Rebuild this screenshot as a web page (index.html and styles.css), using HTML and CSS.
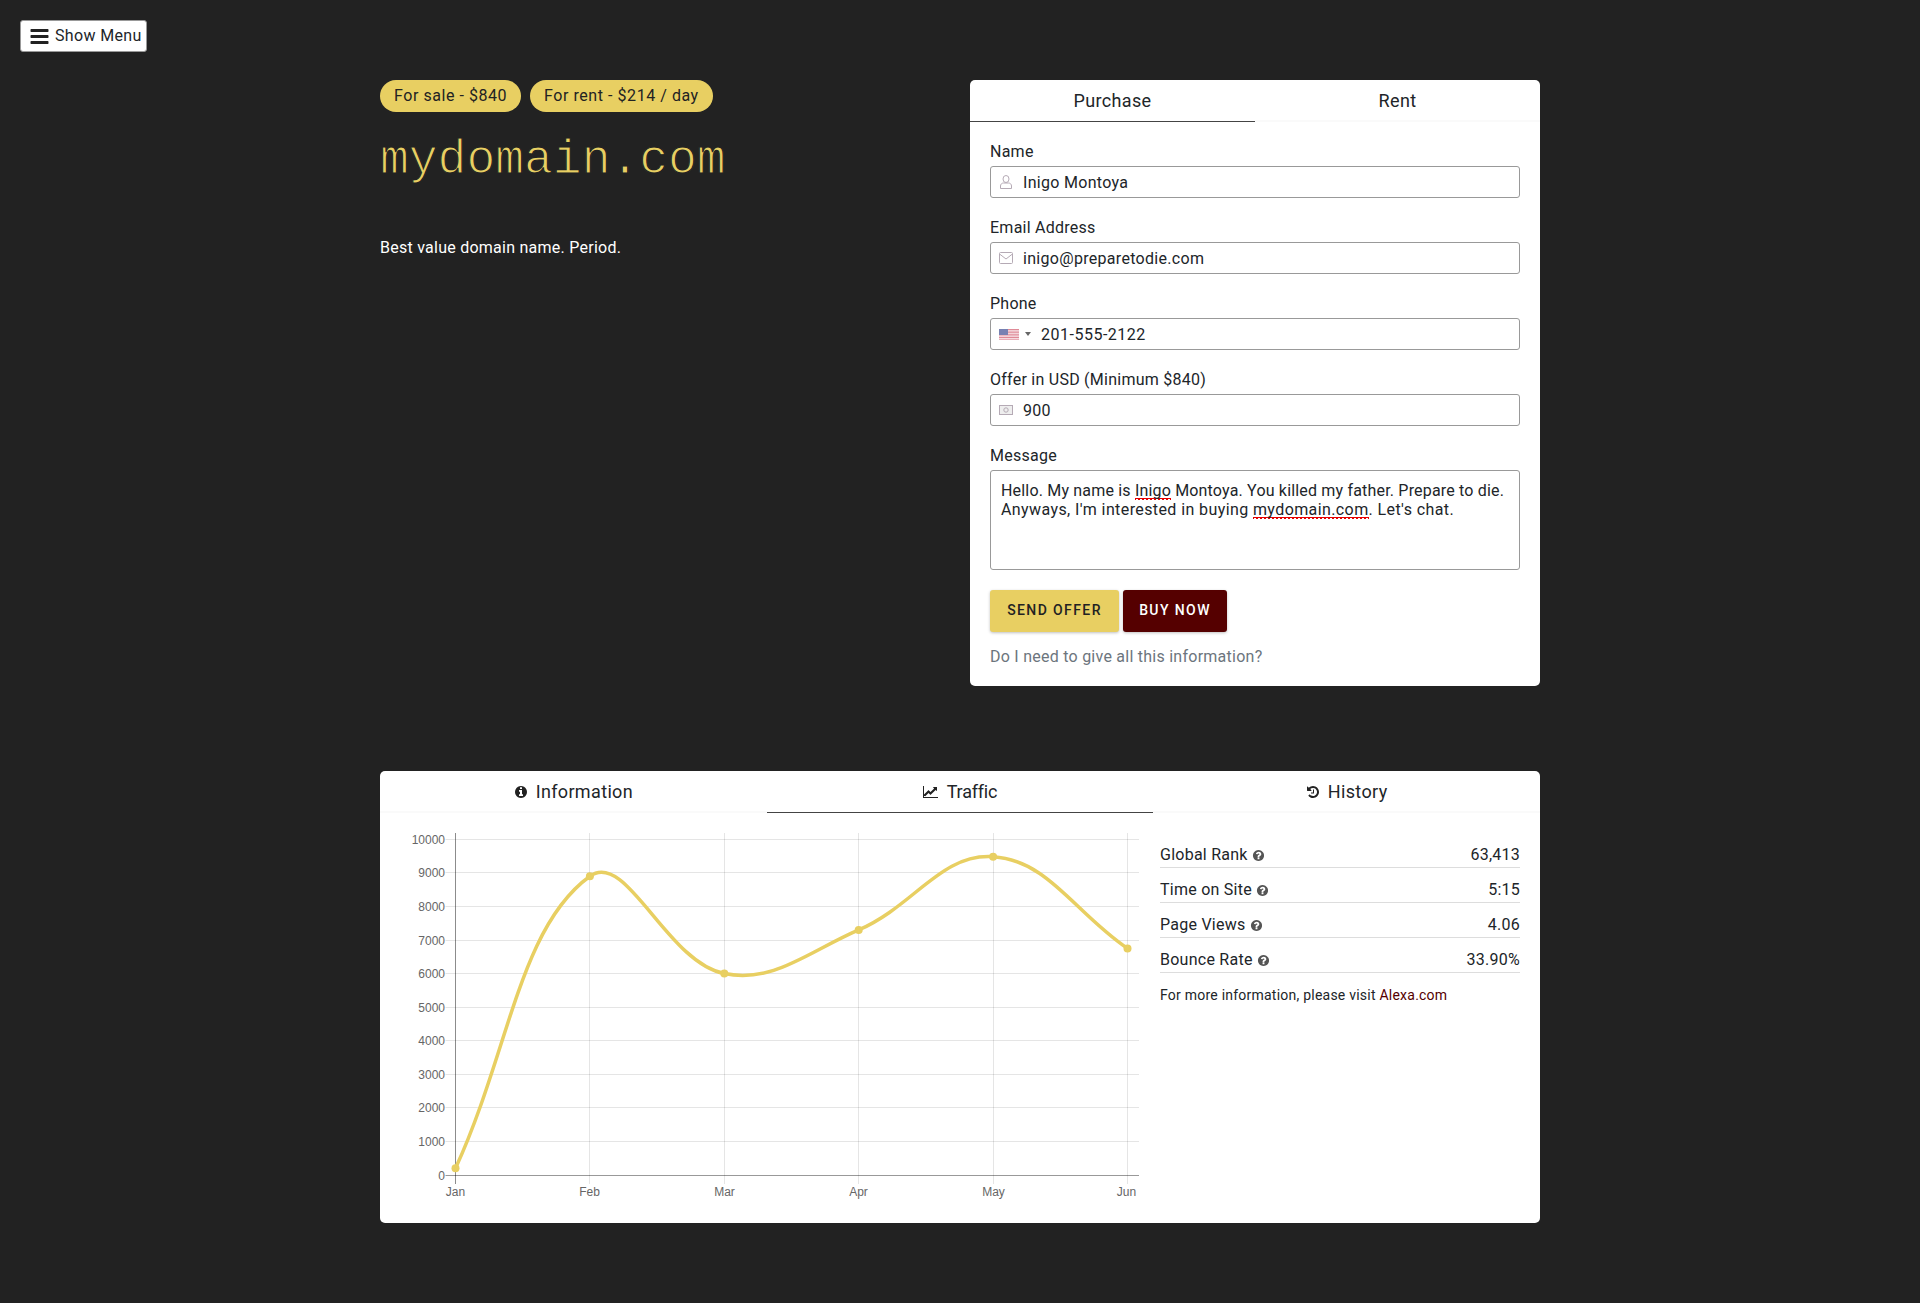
FILE: index.html
```html
<!DOCTYPE html>
<html lang="en">
<head>
    <meta charset="UTF-8">
    <meta name="viewport" content="width=device-width, initial-scale=1.0">
    <title>mydomain.com</title>
    <link rel="stylesheet" href="styles.css">
</head>
<body>
    <div class="menu-bar">
        <button class="menu-button" type="button">
            <svg class="menu-icon" viewBox="0 0 1792 1792"><path d="M1664 1344v128q0 26-19 45t-45 19h-1408q-26 0-45-19t-19-45v-128q0-26 19-45t45-19h1408q26 0 45 19t19 45zm0-512v128q0 26-19 45t-45 19h-1408q-26 0-45-19t-19-45v-128q0-26 19-45t45-19h1408q26 0 45 19t19 45zm0-512v128q0 26-19 45t-45 19h-1408q-26 0-45-19t-19-45v-128q0-26 19-45t45-19h1408q26 0 45 19t19 45z"/></svg>
            <span>Show Menu</span>
        </button>
    </div>

    <div class="container">
        <div class="top-row">
            <div class="intro">
                <div class="pills">
                    <span class="pill">For sale - $840</span>
                    <span class="pill">For rent - $214 / day</span>
                </div>
                <h1 class="domain">mydomain.com</h1>
                <p class="tagline">Best value domain name. Period.</p>
            </div>

            <div class="card">
                <div class="tabs">
                    <a class="tab active">Purchase</a>
                    <a class="tab">Rent</a>
                </div>
                <form class="offer-form">
                    <div class="field">
                        <label for="name">Name</label>
                        <div class="input-wrap">
                            <svg class="input-icon" viewBox="0 0 14 14"><ellipse cx="7" cy="4" rx="3" ry="3.500"/><path d="M1.500 13.500v-2.500c0-1.800 1.400-3 3-3h5c1.600 0 3 1.200 3 3v2.500z"/></svg>
                            <input type="text" id="name" value="Inigo Montoya">
                        </div>
                    </div>
                    <div class="field">
                        <label for="email">Email Address</label>
                        <div class="input-wrap">
                            <svg class="input-icon" viewBox="0 0 14 12"><rect x=".5" y=".5" width="13" height="11" rx="1"/><path d="M.8 2.200 7 7l6.200-4.800"/></svg>
                            <input type="text" id="email" value="inigo@preparetodie.com">
                        </div>
                    </div>
                    <div class="field">
                        <label for="phone">Phone</label>
                        <div class="input-wrap">
                            <svg class="flag" viewBox="0 0 20 11">
                                <rect width="20" height="11" fill="#fff"/>
                                <path d="M0 .5h20M0 2.100h20M0 3.700h20M0 5.300h20M0 6.900h20M0 8.500h20M0 10.200h20" stroke="#c8384f" stroke-width=".9"/>
                                <rect width="9" height="6" fill="#2f3f8a"/>
                            </svg>
                            <span class="flag-caret"></span>
                            <input class="phone-input" type="text" id="phone" value="201-555-2122">
                        </div>
                    </div>
                    <div class="field">
                        <label for="offer">Offer in USD (Minimum $840)</label>
                        <div class="input-wrap">
                            <svg class="input-icon" viewBox="0 0 14 10"><rect x=".5" y=".5" width="13" height="9" fill="#eee"/><circle cx="7" cy="5" r="2.200"/></svg>
                            <input type="text" id="offer" value="900">
                        </div>
                    </div>
                    <div class="field">
                        <label>Message</label>
                        <div class="message" role="textbox">Hello. My name is <span class="misspelled">Inigo</span> Montoya. You killed my father. Prepare to die. <span class="message-end">Anyways, I'm interested in buying <span class="misspelled">mydomain.com</span>. Let's chat.</span></div>
                    </div>
                    <div class="actions">
                        <button class="btn btn-offer" type="button">SEND OFFER</button>
                        <button class="btn btn-buy" type="button">BUY NOW</button>
                    </div>
                    <p class="help-link">Do I need to give all this information?</p>
                </form>
            </div>
        </div>

        <div class="card stats-card">
            <div class="tabs">
                <a class="tab">
                    <svg class="tab-icon" viewBox="0 0 1792 1792"><path d="M1152 1376v-160q0-14-9-23t-23-9h-96v-512q0-14-9-23t-23-9h-320q-14 0-23 9t-9 23v160q0 14 9 23t23 9h96v320h-96q-14 0-23 9t-9 23v160q0 14 9 23t23 9h448q14 0 23-9t9-23zm-128-896v-160q0-14-9-23t-23-9h-192q-14 0-23 9t-9 23v160q0 14 9 23t23 9h192q14 0 23-9t9-23zm640 416q0 209-103 385.500t-279.500 279.500-385.500 103-385.500-103-279.500-279.500-103-385.500 103-385.500 279.500-279.500 385.500-103 385.500 103 279.500 279.500 103 385.500z"/></svg>
                    Information
                </a>
                <a class="tab active tab-traffic">
                    <svg class="tab-icon wide" viewBox="0 0 2048 1792"><path d="M1920 1536v128h-1920v-1536h128v1408h1792zm-128-1248v435q0 21-19.500 29.500t-35.500-7.500l-121-121-633 633q-10 10-23 10t-23-10l-233-233-416 416-192-192 585-585q10-10 23-10t23 10l233 233 464-464-121-121q-16-16-7.500-35.500t29.500-19.500h435q14 0 23 9t9 23z"/></svg>
                    Traffic
                </a>
                <a class="tab">
                    <svg class="tab-icon" viewBox="0 0 1792 1792"><path d="M1664 896q0 156-61 298t-164 245-245 164-298 61q-172 0-327-72.500t-264-204.500q-7-10-6.500-22.500t8.500-20.500l137-138q10-9 25-9 16 2 23 12 73 95 179 147t225 52q104 0 198.500-40.500t163.500-109.500 109.500-163.500 40.500-198.500-40.500-198.500-109.500-163.500-163.500-109.500-198.500-40.500q-98 0-188 35.500t-160 101.500l137 138q31 30 14 69-17 40-59 40h-448q-26 0-45-19t-19-45v-448q0-42 40-59 39-17 69 14l130 129q107-101 244.500-156.500t284.500-55.500q156 0 298 61t245 164 164 245 61 298zm-640-288v448q0 14-9 23t-23 9h-320q-14 0-23-9t-9-23v-64q0-14 9-23t23-9h224v-352q0-14 9-23t23-9h64q14 0 23 9t9 23z"/></svg>
                    History
                </a>
            </div>
            <div class="stats-body">
                <svg id="traffic-chart" class="chart" width="740" height="371" viewBox="0 0 740 371"></svg>
                <div class="stats">
                    <div class="stat"><span>Global Rank <svg class="help-icon" viewBox="0 0 1792 1792"><use href="#question"/></svg></span><span>63,413</span></div>
                    <div class="stat"><span>Time on Site <svg class="help-icon" viewBox="0 0 1792 1792"><use href="#question"/></svg></span><span>5:15</span></div>
                    <div class="stat"><span>Page Views <svg class="help-icon" viewBox="0 0 1792 1792"><use href="#question"/></svg></span><span>4.06</span></div>
                    <div class="stat"><span>Bounce Rate <svg class="help-icon" viewBox="0 0 1792 1792"><use href="#question"/></svg></span><span>33.90%</span></div>
                    <p class="stats-note">For more information, please visit <a class="alexa-link">Alexa.com</a></p>
                </div>
            </div>
        </div>
    </div>

    <svg class="icon-defs" width="0" height="0">
        <defs>
            <path id="question" d="M1024 1376v-192q0-14-9-23t-23-9h-192q-14 0-23 9t-9 23v192q0 14 9 23t23 9h192q14 0 23-9t9-23zm256-672q0-88-55.500-163t-138.500-116-170-41q-243 0-371 213-15 24 8 42l132 100q7 6 19 6 16 0 25-12 53-68 86-92 34-24 86-24 48 0 85.500 26t37.500 59q0 38-20 61t-68 45q-63 28-115.500 86.500t-52.500 125.500v36q0 14 9 23t23 9h192q14 0 23-9t9-23q0-19 21.500-49.500t54.500-49.500q32-18 49-28.500t46-35 44.500-48 28-60.500 12.500-81zm384 192q0 209-103 385.500t-279.500 279.500-385.500 103-385.500-103-279.500-279.500-103-385.500 103-385.500 279.500-279.500 385.500-103 385.500 103 279.500 279.500 103 385.500z"/>
        </defs>
    </svg>

    <script src="chart.js"></script>
</body>
</html>
```

FILE: styles.css
```css
* {
    box-sizing: border-box;
}
body {
    font-family: 'Roboto', 'Liberation Sans', sans-serif;
    font-size: 16px;
    line-height: 24px;
    letter-spacing: 0.25px;
    margin: 0;
    background-color: #222222;
    color: #212529;
}
.menu-bar {
    padding: 20px 0 0 20px;
    height: 80px;
}
.menu-button {
    display: flex;
    align-items: center;
    gap: 5px;
    height: 32px;
    width: 127px;
    padding: 0 0 0 8px;
    background-color: #ffffff;
    border: 1px solid #999999;
    border-radius: 3px;
    font: inherit;
    letter-spacing: 0.35px;
    color: #212529;
}
.menu-icon {
    width: 21px;
    height: 21px;
    fill: #222222;
}
.container {
    width: 1160px;
    margin: 0 auto;
}
.top-row {
    display: grid;
    grid-template-columns: 570px 570px;
    column-gap: 20px;
    margin-bottom: 85px;
}
.pills {
    display: flex;
    gap: 9px;
}
.pill {
    height: 32px;
    line-height: 32px;
    padding: 0 14px;
    border-radius: 16px;
    letter-spacing: 0.55px;
    background-color: #e8cf62;
    color: #222222;
}
.domain {
    margin: 16px 0 0 0;
    height: 64px;
    font-family: 'Liberation Mono', monospace;
    font-size: 48px;
    line-height: 64px;
    font-weight: 400;
    letter-spacing: 0;
    color: #e8cf62;
    -webkit-text-stroke: 1.2px #222222;
}
.tagline {
    margin: 44px 0 0 0;
    color: #ffffff;
}
.card {
    background-color: #ffffff;
    border-radius: 5px;
    overflow: hidden;
}
.tabs {
    display: flex;
}
.tab {
    flex: 1;
    display: flex;
    align-items: center;
    justify-content: center;
    gap: 8px;
    height: 42px;
    font-size: 18px;
    letter-spacing: 0.35px;
    box-shadow: inset 0 -2px #fafafa;
}
.tab.active {
    box-shadow: inset 0 -1px #444444;
}
.tab-traffic {
    letter-spacing: -0.2px;
}
.tab-icon {
    width: 14px;
    height: 14px;
    fill: #222222;
}
.tab-icon.wide {
    width: 16px;
}
.offer-form {
    padding: 20px 20px 17px 20px;
}
.field {
    margin-bottom: 20px;
}
label {
    display: block;
    line-height: 20px;
    margin-bottom: 4px;
}
.input-wrap {
    position: relative;
}
input {
    display: block;
    width: 100%;
    height: 32px;
    padding: 0 10px 0 32px;
    border: 1px solid #999999;
    border-radius: 3px;
    font: inherit;
    letter-spacing: 0.3px;
    color: #212529;
}
.phone-input {
    padding-left: 50px;
    letter-spacing: 0.5px;
}
.input-icon {
    position: absolute;
    left: 9px;
    top: 9px;
    width: 14px;
    height: 14px;
    fill: none;
    stroke: #b5aab5;
    stroke-width: 1;
}
.flag {
    position: absolute;
    left: 9px;
    top: 11px;
    width: 20px;
    height: 11px;
    opacity: 0.65;
}
.flag-caret {
    position: absolute;
    left: 35px;
    top: 14px;
    border-left: 3px solid transparent;
    border-right: 3px solid transparent;
    border-top: 4px solid #666666;
}
.message {
    height: 100px;
    padding: 10px;
    border: 1px solid #999999;
    border-radius: 3px;
    line-height: 19.2px;
    letter-spacing: 0.18px;
}
.message-end {
    letter-spacing: 0.4px;
}
.misspelled {
    background-image:
        linear-gradient(45deg, transparent 60%, #e60000 60%, #e60000 85%, transparent 85%),
        linear-gradient(135deg, transparent 15%, #e60000 15%, #e60000 40%, transparent 40%);
    background-size: 4px 2px;
    background-repeat: repeat-x;
    background-position: 0 100%;
}
.actions {
    display: flex;
    gap: 4px;
}
.btn {
    height: 42px;
    padding: 0 0 2px 0;
    border: none;
    border-radius: 3px;
    font-family: inherit;
    font-size: 14px;
    font-weight: 500;
    letter-spacing: 1.4px;
    box-shadow: 0 1px 3px rgba(0, 0, 0, 0.25);
}
.btn-offer {
    width: 129px;
    background-color: #e8cf62;
    color: #222222;
}
.btn-buy {
    width: 104px;
    background-color: #550000;
    color: #ffffff;
}
.help-link {
    margin: 13px 0 0 0;
    color: #6c757d;
}
.stats-card {
    height: 452px;
}
.stats-body {
    display: grid;
    grid-template-columns: 740px 360px;
    column-gap: 20px;
    padding: 20px;
}
.chart {
    display: block;
}
.chart text {
    font-family: 'Liberation Sans', Arial, sans-serif;
    font-size: 12px;
    letter-spacing: 0;
    fill: #666666;
}
.stats {
    padding-top: 10px;
}
.stat {
    display: flex;
    justify-content: space-between;
    height: 25px;
    margin-bottom: 10px;
    border-bottom: 1px solid #dddddd;
}
.help-icon {
    width: 13px;
    height: 13px;
    vertical-align: -2px;
    fill: #555555;
}
.stats-note {
    margin: 0;
    font-size: 14px;
    letter-spacing: 0.23px;
}
.alexa-link {
    color: #550000;
}
.icon-defs {
    position: absolute;
}
```

FILE: chart.js
```js
const chart = document.getElementById("traffic-chart");
const NS = "http://www.w3.org/2000/svg";

const originX = 55.5;
const originY = 342;
const stepX = 134.4;
const stepY = 33.57;

const labels = ["Jan", "Feb", "Mar", "Apr", "May", "Jun"];
const values = [200, 8900, 6000, 7300, 9480, 6750];

// keep 1px lines on whole pixels
const snap = (n) => Math.floor(n) + 0.5;

const add = (name, attrs, text) => {
    const el = document.createElementNS(NS, name);
    Object.keys(attrs).forEach(key => el.setAttribute(key, attrs[key]));
    if (text) el.textContent = text;
    chart.appendChild(el);
    return el;
};

for (let i = 0; i <= 10; i++) {
    const y = snap(originY - i * stepY);
    add("line", {
        x1: originX - 10, x2: 739, y1: y, y2: y,
        stroke: i === 0 ? "rgba(0,0,0,0.4)" : "rgba(0,0,0,0.1)"
    });
    add("text", { x: 45, y: y + 4, "text-anchor": "end" }, String(i * 1000));
}

labels.forEach((label, i) => {
    const x = snap(originX + i * stepX);
    add("line", {
        x1: x, x2: x, y1: 0, y2: originY + 9,
        stroke: i === 0 ? "rgba(0,0,0,0.45)" : "rgba(0,0,0,0.1)"
    });
    add("text", { x: i === 5 ? x - 1 : x, y: 363, "text-anchor": "middle" }, label);
});

const points = values.map((v, i) => ({
    x: originX + i * stepX,
    y: originY - v / 1000 * stepY
}));

// same spline the chart library uses, tension 0.4
const dist = (a, b) => Math.hypot(a.x - b.x, a.y - b.y);
const controls = points.map((p, i) => {
    const prev = points[i - 1] || p;
    const next = points[i + 1] || p;
    const d01 = dist(prev, p);
    const d12 = dist(p, next);
    const total = d01 + d12;
    const fa = 0.4 * d01 / total;
    const fb = 0.4 * d12 / total;
    return {
        inX: p.x - fa * (next.x - prev.x),
        inY: p.y - fa * (next.y - prev.y),
        outX: p.x + fb * (next.x - prev.x),
        outY: p.y + fb * (next.y - prev.y)
    };
});

let d = `M${points[0].x} ${points[0].y}`;
for (let i = 1; i < points.length; i++) {
    d += ` C${controls[i - 1].outX} ${controls[i - 1].outY} ${controls[i].inX} ${controls[i].inY} ${points[i].x} ${points[i].y}`;
}
add("path", { d: d, fill: "none", stroke: "#e8cf62", "stroke-width": 3.5 });

points.forEach(p => {
    add("circle", { cx: p.x, cy: p.y, r: 4, fill: "#e8cf62" });
});
```
